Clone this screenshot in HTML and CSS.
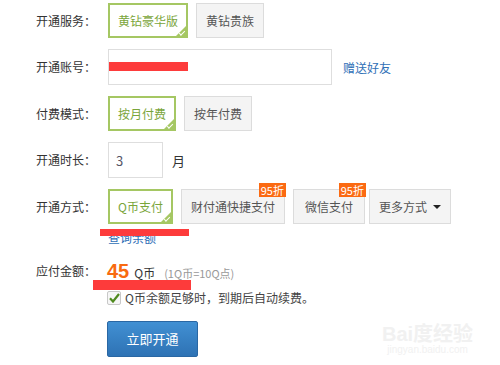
FILE: index.html
```html
<!DOCTYPE html>
<html>
<head>
  <meta charset="utf-8">
  <title>开通黄钻</title>
  <link rel="stylesheet" href="styles.css">
</head>
<body>
  <div class="form">
    <div class="row">
      <span class="label">开通服务：</span>
      <span class="opt selected">黄钻豪华版</span>
      <span class="opt">黄钻贵族</span>
    </div>

    <div class="row">
      <span class="label">开通账号：</span>
      <span class="input account"></span>
      <a class="link gift">赠送好友</a>
    </div>

    <div class="row">
      <span class="label">付费模式：</span>
      <span class="opt selected">按月付费</span>
      <span class="opt">按年付费</span>
    </div>

    <div class="row">
      <span class="label">开通时长：</span>
      <span class="input months">3</span>
      <span class="unit">月</span>
    </div>

    <div class="row">
      <span class="label">开通方式：</span>
      <span class="opt selected">Q币支付</span>
      <span class="opt">财付通快捷支付<em class="badge">95折</em></span>
      <span class="opt wide">微信支付<em class="badge">95折</em></span>
      <span class="opt more">更多方式 <i class="caret"></i></span>
    </div>

    <div class="sub-row">
      <a class="link">查询余额</a>
    </div>

    <div class="row amount-row">
      <span class="label">应付金额：</span>
      <span class="amount">45</span>
      <span class="coin">Q币</span>
      <span class="rate">(1Q币=10Q点)</span>
    </div>

    <div class="sub-row check-row">
      <span class="checkbox">
        <svg width="11" height="10" viewBox="0 0 11 10"><path d="M1 5.2 L4 8.5 L10 1" fill="none" stroke="#4f8a1e" stroke-width="2.2"/></svg>
      </span>
      <span class="check-text">Q币余额足够时，到期后自动续费。</span>
    </div>

    <div class="sub-row">
      <span class="submit">立即开通</span>
    </div>
  </div>

  <!-- redaction marks -->
  <div class="redact r1"></div>
  <div class="redact r2"></div>
  <div class="redact r3"></div>

  <div class="watermark">
    <span class="wm-logo">Bai度经验</span>
    <span class="wm-url">jingyan.baidu.com</span>
  </div>
</body>
</html>
```

FILE: styles.css
```css
body {
  margin: 0;
  background: #fff;
  font-family: "Noto Sans CJK SC", "Liberation Sans", sans-serif;
  font-size: 12px;
  color: #333;
  width: 500px;
  height: 365px;
  overflow: hidden;
  position: relative;
}

.form {
  padding: 3px 0 0 36px;
  display: flex;
  flex-direction: column;
  gap: 11px;
}

.row {
  display: flex;
  align-items: center;
}

.label {
  width: 72px;
  flex-shrink: 0;
  color: #333;
  line-height: 14px;
}

.opt {
  position: relative;
  height: 33px;
  padding: 0 9px;
  margin-right: 8px;
  display: flex;
  align-items: center;
  background: #f4f4f4;
  border: 1px solid #dcdcdc;
  color: #555;
  font-size: 12px;
}

.opt.wide {
  padding: 0 11px;
  margin-right: 4px;
}

.opt.selected {
  height: 31px;
  padding: 0 8px;
  background: #fff;
  border: 2px solid #a5c763;
  color: #7aa53a;
}

.opt.selected::after {
  content: "";
  position: absolute;
  right: -1px;
  bottom: -1px;
  border-style: solid;
  border-width: 0 0 12px 12px;
  border-color: transparent transparent #a5c763 transparent;
}

.opt.selected::before {
  content: "";
  position: absolute;
  right: 1px;
  bottom: 2px;
  width: 5px;
  height: 2px;
  border-left: 1px solid #fff;
  border-bottom: 1px solid #fff;
  transform: rotate(-45deg);
  z-index: 1;
}

.badge {
  position: absolute;
  top: -7px;
  right: -2px;
  padding: 0 2px;
  height: 14px;
  line-height: 14px;
  background: #fb6a12;
  color: #fff;
  font-style: normal;
  font-size: 11px;
}

.caret {
  display: inline-block;
  margin-left: 6px;
  border-style: solid;
  border-width: 4px 4px 0 4px;
  border-color: #222 transparent transparent transparent;
}

.input {
  height: 34px;
  border: 1px solid #dedede;
  background: #fff;
  display: flex;
  align-items: center;
}

.account {
  width: 222px;
}

.months {
  width: 46px;
  padding-left: 7px;
  color: #556;
  font-size: 13px;
}

.unit {
  margin-left: 9px;
  font-size: 13px;
}

.link {
  color: #2f6fb6;
  text-decoration: none;
}

.gift {
  margin-left: 11px;
  margin-top: 0;
}

.sub-row {
  display: flex;
  align-items: center;
  padding-left: 72px;
  margin-top: -3px;
  line-height: 12px;
}

.amount-row {
  margin-top: 4px;
  height: 24px;
}

.amount {
  font-family: "Liberation Sans", sans-serif;
  font-weight: bold;
  font-size: 20px;
  color: #f86a10;
  margin-left: -1px;
}

.coin {
  margin-left: 5px;
  margin-top: 3px;
}

.rate {
  margin-left: 9px;
  margin-top: 4px;
  font-size: 11px;
  color: #999;
}

.check-row {
  margin-top: -3px;
  padding-left: 71px;
}

.checkbox {
  width: 12px;
  height: 12px;
  border: 1px solid #c8c8c8;
  border-radius: 2px;
  background: #f6f6f6;
  display: flex;
  align-items: center;
  justify-content: center;
}

.check-text {
  margin-left: 4px;
  color: #444;
}

.submit {
  margin-top: 8px;
  margin-left: -1px;
  width: 89px;
  height: 34px;
  display: flex;
  align-items: center;
  justify-content: center;
  background: linear-gradient(#4190d3, #2e72b4);
  border: 1px solid #2a67a3;
  border-radius: 2px;
  color: #fff;
  font-size: 13px;
}

.redact {
  position: absolute;
  background: #fd3b3b;
}

.r1 { left: 109px; top: 62px; width: 79px; height: 9px; }
.r2 { left: 100px; top: 229px; width: 89px; height: 7px; }
.r3 { left: 93px; top: 280px; width: 98px; height: 10px; }

.watermark {
  position: absolute;
  left: 382px;
  top: 324px;
  display: flex;
  flex-direction: column;
  align-items: center;
  color: #f1f1f1;
  font-family: "Liberation Sans", "Noto Sans CJK SC", sans-serif;
}

.wm-logo {
  font-size: 20px;
  font-weight: bold;
  line-height: 20px;
}

.wm-url {
  font-size: 10px;
  line-height: 12px;
}
```
